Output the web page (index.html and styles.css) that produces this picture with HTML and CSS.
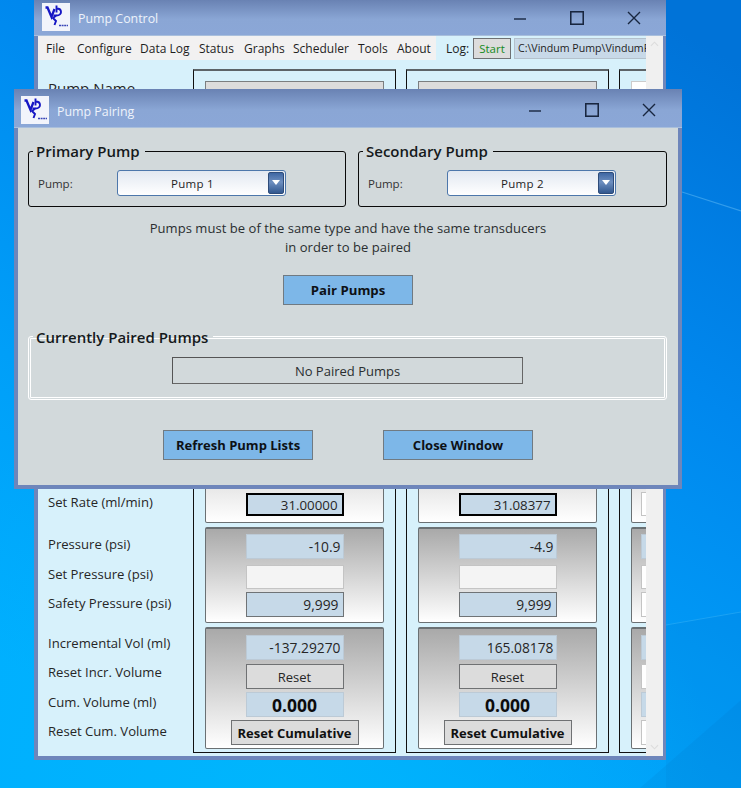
FILE: index.html
```html
<!DOCTYPE html>
<html lang="en">
<head>
<meta charset="utf-8">
<title>Pump Pairing</title>
<link rel="stylesheet" href="styles.css">
</head>
<body>
<svg class="wallpaper" viewBox="0 0 741 788" aria-hidden="true">
  <defs>
    <linearGradient id="sky" x1="0.85" y1="0" x2="0.3" y2="1">
      <stop offset="0" stop-color="#0073d8"/>
      <stop offset=".35" stop-color="#0088ee"/>
      <stop offset=".7" stop-color="#009ff8"/>
      <stop offset="1" stop-color="#00aeff"/>
    </linearGradient>
    <radialGradient id="glow" gradientUnits="userSpaceOnUse" cx="280" cy="788" r="430">
      <stop offset="0" stop-color="#00b6fc" stop-opacity=".9"/>
      <stop offset="1" stop-color="#00b6fc" stop-opacity="0"/>
    </radialGradient>
    <symbol id="logo" viewBox="0 0 28 28">
      <rect width="28" height="28" fill="#f2f4fb"/>
      <path d="M3.5 4.5 L5.5 4.5 L9.5 14 L12.5 6" fill="none" stroke="#1616c4" stroke-width="2.3"/>
      <path d="M14.5 2.5 L14.5 9.5 M14.5 5.5 C20.5 5.5 20.5 12.5 14.5 12.5 L11.5 12.5 M15 12 L11 15 L14 18 L12.5 22" fill="none" stroke="#1616c4" stroke-width="1.9"/>
      <path d="M17 22.5 H26" stroke="#3a46b8" stroke-width="1.6" stroke-dasharray="2 .6"/>
    </symbol>
  </defs>
  <rect width="741" height="788" fill="url(#sky)"/>
  <rect width="741" height="788" fill="url(#glow)"/>
  <path d="M666 625L741 612V788H666Z" fill="#005fb0" opacity=".08"/>
  <path d="M741 700V788H640Z" fill="#005fb0" opacity=".1"/>
  <path d="M682 192L741 211" stroke="#5bb8f5" stroke-width="1.2" opacity=".55"/>
  <path d="M666 625L741 612" stroke="#4cc0fa" stroke-width="1" opacity=".35"/>
</svg>

<section class="window main-window">
  <header class="titlebar">
    <svg class="logo"><use href="#logo"/></svg>
    <span class="title">Pump Control</span>
    <span class="controls">
      <svg class="ctl" viewBox="0 0 14 14"><path d="M1 8H13"/></svg>
      <svg class="ctl" viewBox="0 0 14 14"><rect x="0.75" y="0.75" width="12.5" height="12.5"/></svg>
      <svg class="ctl" viewBox="0 0 14 14"><path d="M1 1L13 13M13 1L1 13"/></svg>
    </span>
  </header>
  <div class="body-row">
    <div class="client">
      <div class="toolbar">
        <nav class="menu">
          <span class="m-file">File</span><span class="m-conf">Configure</span><span class="m-data">Data Log</span><span class="m-stat">Status</span><span class="m-graph">Graphs</span><span class="m-sch">Scheduler</span><span class="m-tools">Tools</span><span>About</span>
        </nav>
        <span class="log-label">Log:</span>
        <span class="start">Start</span>
        <span class="path">C:\Vindum Pump\VindumPump</span>
      </div>
      <div class="grid">
        <div class="labels">
          <div class="name-label">Pump Name</div>
          <div class="lbl l-rate">Set Rate (ml/min)</div>
          <div class="lbl">Pressure (psi)</div>
          <div class="lbl">Set Pressure (psi)</div>
          <div class="lbl">Safety Pressure (psi)</div>
          <div class="lbl l-inc">Incremental Vol (ml)</div>
          <div class="lbl">Reset Incr. Volume</div>
          <div class="lbl">Cum. Volume (ml)</div>
          <div class="lbl">Reset Cum. Volume</div>
        </div>

        <article class="col">
          <div class="name-field"></div>
          <div class="panel p-rate"><div class="fld rate">31.00000</div></div>
          <div class="panel p-press">
            <div class="fld">-10.9</div>
            <div class="fld blank"></div>
            <div class="fld safety">9,999</div>
          </div>
          <div class="panel p-vol">
            <div class="fld">-137.29270</div>
            <div class="fld btn">Reset</div>
            <div class="fld big">0.000</div>
            <div class="fld btn wide">Reset Cumulative</div>
          </div>
        </article>

        <article class="col">
          <div class="name-field"></div>
          <div class="panel p-rate"><div class="fld rate">31.08377</div></div>
          <div class="panel p-press">
            <div class="fld">-4.9</div>
            <div class="fld blank"></div>
            <div class="fld safety">9,999</div>
          </div>
          <div class="panel p-vol">
            <div class="fld">165.08178</div>
            <div class="fld btn">Reset</div>
            <div class="fld big">0.000</div>
            <div class="fld btn wide">Reset Cumulative</div>
          </div>
        </article>

        <article class="col col-clipped">
          <div class="name-field blank-name"></div>
          <div class="panel p-rate"><div class="fld outline"></div></div>
          <div class="panel p-press">
            <div class="fld"></div>
            <div class="fld outline"></div>
            <div class="fld outline"></div>
          </div>
          <div class="panel p-vol">
            <div class="fld"></div>
            <div class="fld outline"></div>
            <div class="fld"></div>
            <div class="fld outline wide"></div>
          </div>
        </article>
      </div>
    </div>
    <aside class="scrollbar">
      <svg viewBox="0 0 10 6"><path d="M1 5L5 1L9 5"/></svg>
      <svg viewBox="0 0 10 6"><path d="M1 1L5 5L9 1"/></svg>
    </aside>
  </div>
</section>

<section class="window pair-window">
  <header class="titlebar">
    <svg class="logo"><use href="#logo"/></svg>
    <span class="title">Pump Pairing</span>
    <span class="controls">
      <svg class="ctl" viewBox="0 0 14 14"><path d="M1 8H13"/></svg>
      <svg class="ctl" viewBox="0 0 14 14"><rect x="0.75" y="0.75" width="12.5" height="12.5"/></svg>
      <svg class="ctl" viewBox="0 0 14 14"><path d="M1 1L13 13M13 1L1 13"/></svg>
    </span>
  </header>
  <div class="pair-body">
    <div class="pair-groups">
      <fieldset class="group primary">
        <legend>Primary Pump</legend>
        <div class="pump-row">
          <span class="pump-label">Pump:</span>
          <div class="combo"><span>Pump 1</span><i class="arrow"></i></div>
        </div>
      </fieldset>
      <fieldset class="group secondary">
        <legend>Secondary Pump</legend>
        <div class="pump-row">
          <span class="pump-label">Pump:</span>
          <div class="combo"><span>Pump 2</span><i class="arrow"></i></div>
        </div>
      </fieldset>
    </div>
    <p class="note">Pumps must be of the same type and have the same transducers<br>in order to be paired</p>
    <button class="action pair">Pair Pumps</button>
    <fieldset class="group current">
      <legend>Currently Paired Pumps</legend>
      <div class="paired">No Paired Pumps</div>
    </fieldset>
    <div class="actions">
      <button class="action">Refresh Pump Lists</button>
      <button class="action">Close Window</button>
    </div>
  </div>
</section>
</body>
</html>
```
FILE: styles.css
```css
* { box-sizing: border-box; }
html, body { margin: 0; height: 100%; }
body {
  position: relative;
  width: 741px;
  height: 788px;
  overflow: hidden;
  font-family: "Open Sans", "Noto Sans", sans-serif;
  font-size: 13px;
  color: #1e1e1e;
  background: #0090f0;
}
.wallpaper { position: absolute; left: 0; top: 0; width: 741px; height: 788px; }

.window {
  position: absolute;
  display: flex;
  flex-direction: column;
  border: 4px solid #6e86bb;
  border-top: 0;
}
.main-window { left: 34px; top: 0; width: 632px; height: 760px; border-right-width: 3px; }
.pair-window { left: 14px; top: 89px; width: 668px; height: 400px; background: #d2d9db; }

.titlebar {
  flex: none;
  display: flex;
  align-items: center;
  height: 36px;
  margin: 0 -4px;
  padding: 0 4px;
  background: linear-gradient(#6982b3, #8aa6d5 55%, #8ba7d7);
  border-bottom: 1px solid #a9bfdc;
  color: #eef3fb;
}
.pair-window .titlebar { height: 39px; padding-top: 4px; }
.main-window .titlebar { margin-right: -3px; }
.logo { width: 28px; height: 28px; margin-left: 3px; flex: none; }
.main-window .logo { margin-left: 4px; margin-top: -1px; }
.title { margin-left: 8px; padding-top: 2px; font-size: 12.4px; }
.controls { margin-left: auto; margin-right: 21px; display: flex; align-items: center; gap: 43px; }
.pair-window .controls { margin-right: 22px; }
.ctl { width: 14px; height: 14px; fill: none; stroke: #18263f; stroke-width: 1.4; }
.ctl rect { stroke-width: 1.6; }

.body-row { flex: 1; display: flex; min-height: 0; }
.client { width: 608px; background: #d7f1fb; overflow: hidden; flex: none; }
.scrollbar {
  flex: 1;
  background: #f0f0f0;
  display: flex;
  flex-direction: column;
  justify-content: space-between;
  align-items: center;
  padding: 5px 0 6px;
}
.scrollbar svg { width: 9px; height: 6px; fill: none; stroke: #dcdcdc; stroke-width: 1.2; }

.toolbar { display: flex; align-items: center; height: 24px; font-size: 12px; }
.menu {
  display: flex;
  align-items: center;
  width: 398px;
  height: 24px;
  padding-left: 8px;
  background: #f2f1f1;
  white-space: nowrap;
}
.m-file { width: 31px; }
.m-conf { width: 63px; margin-top: 1px; }
.m-data { width: 59px; }
.m-stat { width: 45px; }
.m-graph { width: 49px; }
.m-sch { width: 65px; }
.m-tools { width: 39px; }
.log-label { margin-left: 10px; width: 27px; }
.start {
  width: 38px;
  height: 21px;
  display: flex;
  align-items: center;
  justify-content: center;
  background: #dcdcdc;
  border: 1px solid #6f7173;
  color: #168a22;
  font-size: 11.5px;
}
.path {
  margin-left: 3px;
  flex: 1;
  min-width: 0;
  height: 21px;
  padding: 2px 0 0 3px;
  background: #c8d9e8;
  border: 1px solid #b4c1cc;
  border-right: 0;
  font-size: 10.6px;
  white-space: nowrap;
  overflow: hidden;
}

.grid {
  display: flex;
  gap: 10px;
  align-items: flex-start;
}
.labels { width: 145px; flex: none; padding: 18px 0 0 10px; white-space: nowrap; color: #262626; }
.name-label { font-size: 15px; height: 410.3px; line-height: 21px; }
.lbl { height: 29.3px; line-height: 29.3px; font-size: 13.1px; }
.l-rate { height: 42px; }
.l-inc { margin-top: 11px; }

.col {
  flex: none;
  width: 203px;
  height: 684px;
  margin-top: 9px;
  padding: 0 11px;
  border: 1px solid #101010;
  border-top: 2px solid #5d6468;
}
.name-field {
  height: 50px;
  margin-top: 10px;
  background: #dcdcdc;
  border: 1px solid #7b7e80;
}
.blank-name { background: #fff; border-color: #ccc; }
.panel {
  display: flex;
  flex-direction: column;
  align-items: center;
  background: linear-gradient(#a9a9a9, #fff);
  border: 1px solid #6a7073;
  border-top-width: 2px;
  border-radius: 2px;
}
.p-rate {
  height: 73px;
  margin-top: 319px;
  justify-content: flex-end;
  padding-bottom: 6px;
  background: linear-gradient(#cfcfcf, #fff);
}
.p-press { height: 96px; margin-top: 4px; padding-top: 5px; }
.p-press .fld:nth-child(2) { margin: 6px 0 3.5px; height: 24px; }
.p-vol { height: 122px; margin-top: 4px; padding-top: 6px; gap: 3px; }
.p-vol .fld { height: 25px; }
.p-vol .fld:first-child { height: 24.5px; margin-bottom: 1.5px; }

.fld {
  flex: none;
  width: 98px;
  height: 24.5px;
  display: flex;
  align-items: center;
  justify-content: flex-end;
  padding-right: 2px;
  background: #c6d9e8;
  border: 1px solid #bccad6;
  font-size: 13.8px;
  color: #262626;
  white-space: nowrap;
}
.rate { height: 23px; border: 2px solid #000; padding-right: 4px; font-size: 13.3px; }
.safety { height: 25px; border-color: #6f7376; padding-right: 4px; }
.blank { background: #f4f4f4; border-color: #c4c4c4; }
.outline { background: #fff; border-color: #c4c4c4; }
.btn {
  justify-content: center;
  padding: 0;
  background: #dcdcdc;
  border-color: #6f7173;
  font-size: 13px;
}
.big { justify-content: center; padding: 0; font-size: 17.5px; font-weight: 700; color: #0c0c0c; }
.wide {
  width: 128px;
  font-weight: 700;
  font-size: 13px;
  color: #111;
}
.col-clipped .panel { align-items: flex-start; padding-left: 9px; }

.pair-body { flex: 1; padding: 13px 0 0 10px; display: flex; flex-direction: column; }
.pair-groups { display: flex; gap: 12px; }
.group {
  margin: 0;
  padding: 0 7px;
  border: 1px solid #0a0a0a;
  border-radius: 3px;
}
.group legend {
  padding: 0 5px 0 3px;
  margin-left: -3px;
  font-size: 15px;
  font-weight: 600;
  line-height: 20px;
  color: #15191b;
}
.primary { width: 318px; height: 66px; }
.secondary { width: 309px; height: 66px; }
.pump-row { display: flex; align-items: center; margin-top: 9px; font-size: 11.5px; }
.pump-label { width: 81px; padding-left: 2px; color: #333; }
.combo {
  position: relative;
  width: 169px;
  height: 26px;
  display: flex;
  align-items: center;
  justify-content: center;
  padding-right: 18px;
  background: linear-gradient(#e2e8f1, #fff);
  border: 1px solid #4d77ab;
  border-radius: 3px;
  font-size: 11.5px;
  letter-spacing: .3px;
}
.arrow {
  position: absolute;
  right: 1px;
  top: 1px;
  width: 16px;
  height: 22px;
  background: linear-gradient(#3f67a3, #6e8fc0 45%, #32588f);
  border: 1px solid #2e4c7a;
  border-radius: 2px;
}
.arrow::after {
  content: "";
  position: absolute;
  left: 3px;
  top: 7px;
  border-left: 4px solid transparent;
  border-right: 4px solid transparent;
  border-top: 5px solid #fff;
}
.note {
  margin: 12px 0 0 -10px;
  text-align: center;
  font-size: 13px;
  line-height: 19px;
  color: #2a2e30;
  letter-spacing: .05px;
}
.action {
  width: 150px;
  height: 30px;
  padding: 0;
  background: #7db7e8;
  border: 1px solid #707a82;
  font-family: inherit;
  font-size: 13px;
  font-weight: 700;
  color: #0d1116;
}
.pair { width: 130px; margin: 18px 0 0 255px; font-size: 13.2px; }
.current {
  width: 639px;
  height: 75px;
  margin-top: 20px;
  padding: 0;
  border: 1px solid #fff;
  box-shadow: inset 0 0 0 1px #d2d9db, inset 0 0 0 2px #fff;
}
.group.current legend { margin-left: 4px; padding-top: 2px; font-size: 15px; font-weight: 600; }
.paired {
  width: 351px;
  height: 27px;
  margin: 10px 0 0 143px;
  display: flex;
  align-items: center;
  justify-content: center;
  border: 1px solid #666;
  border-top-color: #555;
  border-left-color: #555;
  background: #d2d9db;
  font-size: 13px;
  color: #2a2e30;
}
.actions { display: flex; gap: 70px; margin: 30px 0 0 135px; }
```
